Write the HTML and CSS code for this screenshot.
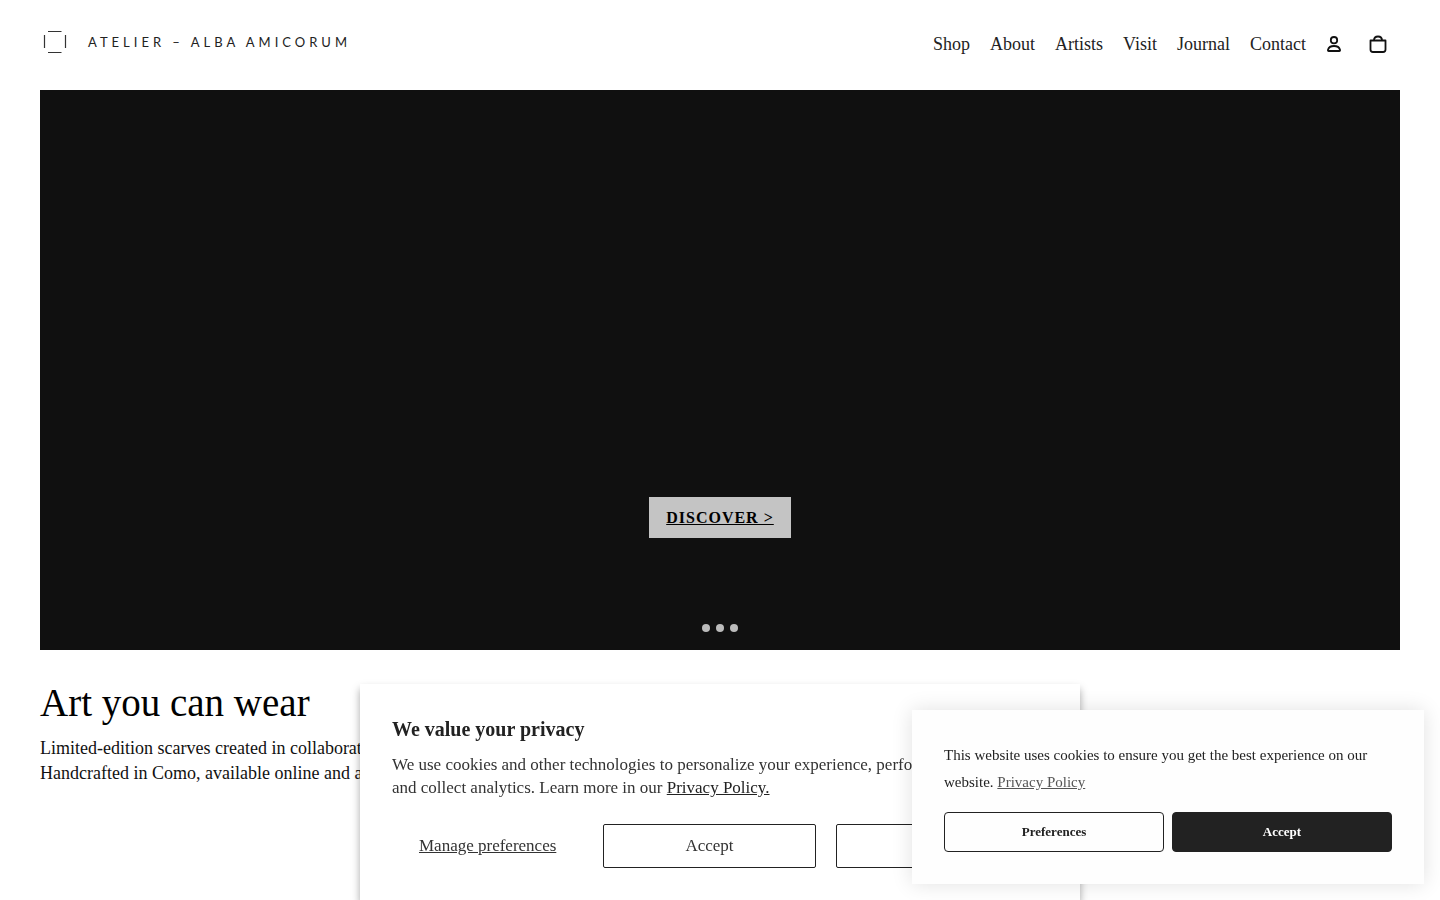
FILE: index.html
```
<!DOCTYPE html>
<html lang="en">

<head>
    <meta charset="UTF-8">
    <meta name="viewport" content="width=device-width, initial-scale=1.0">
    <title>Atelier - Alba Amicorum</title>
    <link rel="stylesheet" href="styles.css">
</head>

<body>
    <header class="header">
        <a class="logo" href="#">
            <svg width="24" height="24" viewBox="0 0 24 24" fill="none" stroke="#333" stroke-width="1.2">
                <path d="M5 1.5H18.500M5 22.5H18.500M1.5 5V18M22.5 5V18" />
            </svg>
            <span>ATELIER – ALBA AMICORUM</span>
        </a>
        <nav class="nav">
            <a href="#">Shop</a>
            <a href="#">About</a>
            <a href="#">Artists</a>
            <a href="#">Visit</a>
            <a href="#">Journal</a>
            <a href="#">Contact</a>
            <a class="icon" href="#" aria-label="Account">
                <svg width="24" height="24" viewBox="0 0 24 24" fill="none" stroke="#111" stroke-width="1.8">
                    <circle cx="12" cy="8.200" r="3.200" />
                    <path d="M6.800 19H17.2Q18.300 19 18 17.800C17.300 15.200 15 14 12 14S6.700 15.200 6 17.800Q5.700 19 6.800 19Z" stroke-linejoin="round" />
                </svg>
            </a>
            <a class="icon" href="#" aria-label="Cart">
                <svg width="24" height="24" viewBox="0 0 24 24" fill="none" stroke="#111" stroke-width="1.8">
                    <path d="M4.500 8.500H19.500V17.500Q19.500 20 17 20H7Q4.500 20 4.500 17.500Z" stroke-linejoin="round" />
                    <path d="M8 8.500C8 5.500 9.200 4.500 12 4.500S16 5.500 16 8.500" />
                </svg>
            </a>
        </nav>
    </header>

    <main class="main">
        <section class="hero">
            <a class="discover" href="#">DISCOVER &gt;</a>
            <div class="dots">
                <button type="button" aria-label="Slide 1"></button>
                <button type="button" aria-label="Slide 2"></button>
                <button type="button" aria-label="Slide 3"></button>
            </div>
        </section>
        <section class="intro">
            <h1>Art you can wear</h1>
            <p>Limited-edition scarves created in collaboration with artists.<br>
                Handcrafted in Como, available online and at our atelier.</p>
        </section>
    </main>

    <div class="privacy">
        <h2>We value your privacy</h2>
        <p>We use cookies and other technologies to personalize your experience, perform marketing,<br>
            and collect analytics. Learn more in our <a href="#">Privacy Policy.</a></p>
        <div class="privacy-btns">
            <button type="button" class="manage">Manage preferences</button>
            <button type="button">Accept</button>
            <button type="button">Decline</button>
        </div>
    </div>

    <div class="cookie">
        <p>This website uses cookies to ensure you get the best experience on our website. <a href="#">Privacy Policy</a></p>
        <div class="cookie-btns">
            <button type="button">Preferences</button>
            <button type="button" class="dark">Accept</button>
        </div>
    </div>
</body>

</html>
```
FILE: styles.css
```
* {
    margin: 0;
    padding: 0;
    box-sizing: border-box;
}

body {
    font-family: "Liberation Serif", "Times New Roman", serif;
    font-size: 18px;
    color: #111;
    background-color: #fff;
}

button {
    font-family: inherit;
    cursor: pointer;
}

.header {
    display: flex;
    justify-content: space-between;
    align-items: center;
    height: 90px;
    padding: 0 40px 2px;
}

.logo {
    display: flex;
    align-items: center;
    gap: 21px;
    padding: 0 0 4px 3px;
    font-family: Lato, sans-serif;
    font-size: 13px;
    letter-spacing: 4px;
    color: #222;
    text-decoration: none;
}

.nav {
    display: flex;
    align-items: center;
    gap: 20px;
    padding-right: 10px;
}

.nav a {
    color: #222;
    text-decoration: none;
}

.nav .icon {
    display: flex;
    margin-left: -4px;
}

.nav .icon + .icon {
    margin-left: 0;
}

.main {
    padding: 0 40px;
}

.hero {
    display: flex;
    flex-direction: column;
    justify-content: flex-end;
    align-items: center;
    gap: 86px;
    min-height: 560px;
    padding-bottom: 18px;
    background-color: #101010;
}

.discover {
    padding: 0 17px;
    font-size: 16px;
    font-weight: bold;
    line-height: 41px;
    letter-spacing: 1px;
    color: #000;
    background-color: #c4c4c4;
}

.dots {
    display: flex;
    gap: 6px;
}

.dots button {
    width: 8px;
    height: 8px;
    border: none;
    border-radius: 50%;
    background-color: #bbb;
}

.intro {
    padding: 28px 0 100px;
}

.intro h1 {
    font-size: 39px;
    font-weight: normal;
    line-height: 50px;
    color: #000;
}

.intro p {
    margin-top: 8px;
    line-height: 25px;
}

/* privacy dialog */
.privacy {
    position: fixed;
    bottom: 0;
    left: 50%;
    width: 50%;
    min-width: 600px;
    padding: 32px;
    transform: translateX(-50%);
    color: #333;
    background-color: #fff;
    box-shadow: 0 5px 8px rgba(0, 0, 0, 0.35);
}

.privacy h2 {
    font-size: 20px;
    line-height: 26px;
    color: #222;
}

.privacy p {
    margin: 11px 0 25px;
    font-size: 17px;
    line-height: 23px;
}

.privacy p a {
    color: #222;
}

.privacy-btns {
    display: grid;
    grid-template-columns: 191fr 212fr 212fr;
    gap: 20px;
}

.privacy-btns button {
    height: 44px;
    font-size: 17px;
    color: #333;
    border: 1px solid #222;
    border-radius: 2px;
    background-color: #fff;
}

.privacy-btns .manage {
    border: none;
    text-decoration: underline;
}

/* cookie bar */
.cookie {
    position: fixed;
    right: 16px;
    bottom: 16px;
    width: 512px;
    padding: 32px;
    color: #222;
    background-color: #fefefe;
    box-shadow: 0 0 20px rgba(0, 0, 0, 0.12);
}

.cookie p {
    font-size: 15px;
    line-height: 27px;
}

.cookie p a {
    color: #555;
}

.cookie-btns {
    display: grid;
    grid-template-columns: 1fr 1fr;
    gap: 8px;
    margin-top: 16px;
}

.cookie-btns button {
    height: 40px;
    font-size: 13px;
    font-weight: bold;
    color: #222;
    border: 1px solid #222;
    border-radius: 4px;
    background-color: #fefefe;
}

.cookie-btns .dark {
    color: #fff;
    background-color: #222;
}
```
